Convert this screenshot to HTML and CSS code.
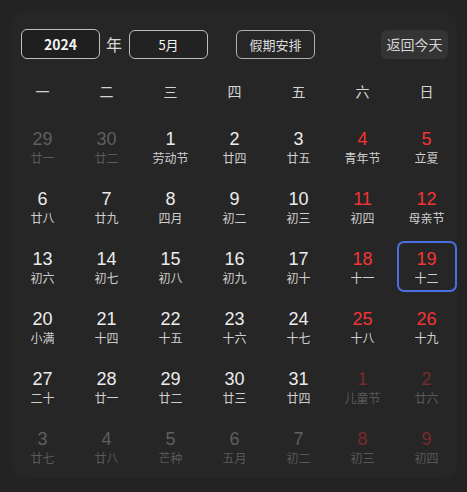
FILE: index.html
```html
<!DOCTYPE html>
<html lang="zh">
<head>
<meta charset="utf-8">
<link rel="stylesheet" href="styles.css">
</head>
<body>
<div class="card">
  <div class="toolbar">
    <div class="select year">2024</div>
    <span class="unit">年</span>
    <div class="select month">5月</div>
    <button class="btn outline">假期安排</button>
    <span class="spacer"></span>
    <button class="btn fill">返回今天</button>
  </div>
  <div class="weekdays">
    <span>一</span><span>二</span><span>三</span><span>四</span><span>五</span><span>六</span><span>日</span>
  </div>
  <div class="days">
    <div class="day other"><b>29</b><i>廿一</i></div>
    <div class="day other"><b>30</b><i>廿二</i></div>
    <div class="day"><b>1</b><i>劳动节</i></div>
    <div class="day"><b>2</b><i>廿四</i></div>
    <div class="day"><b>3</b><i>廿五</i></div>
    <div class="day wk"><b>4</b><i>青年节</i></div>
    <div class="day wk"><b>5</b><i>立夏</i></div>

    <div class="day"><b>6</b><i>廿八</i></div>
    <div class="day"><b>7</b><i>廿九</i></div>
    <div class="day"><b>8</b><i>四月</i></div>
    <div class="day"><b>9</b><i>初二</i></div>
    <div class="day"><b>10</b><i>初三</i></div>
    <div class="day wk"><b>11</b><i>初四</i></div>
    <div class="day wk"><b>12</b><i>母亲节</i></div>

    <div class="day"><b>13</b><i>初六</i></div>
    <div class="day"><b>14</b><i>初七</i></div>
    <div class="day"><b>15</b><i>初八</i></div>
    <div class="day"><b>16</b><i>初九</i></div>
    <div class="day"><b>17</b><i>初十</i></div>
    <div class="day wk"><b>18</b><i>十一</i></div>
    <div class="day wk today"><b>19</b><i>十二</i></div>

    <div class="day"><b>20</b><i>小满</i></div>
    <div class="day"><b>21</b><i>十四</i></div>
    <div class="day"><b>22</b><i>十五</i></div>
    <div class="day"><b>23</b><i>十六</i></div>
    <div class="day"><b>24</b><i>十七</i></div>
    <div class="day wk"><b>25</b><i>十八</i></div>
    <div class="day wk"><b>26</b><i>十九</i></div>

    <div class="day"><b>27</b><i>二十</i></div>
    <div class="day"><b>28</b><i>廿一</i></div>
    <div class="day"><b>29</b><i>廿二</i></div>
    <div class="day"><b>30</b><i>廿三</i></div>
    <div class="day"><b>31</b><i>廿四</i></div>
    <div class="day other wk"><b>1</b><i>儿童节</i></div>
    <div class="day other wk"><b>2</b><i>廿六</i></div>

    <div class="day other"><b>3</b><i>廿七</i></div>
    <div class="day other"><b>4</b><i>廿八</i></div>
    <div class="day other"><b>5</b><i>芒种</i></div>
    <div class="day other"><b>6</b><i>五月</i></div>
    <div class="day other"><b>7</b><i>初二</i></div>
    <div class="day other wk"><b>8</b><i>初三</i></div>
    <div class="day other wk"><b>9</b><i>初四</i></div>
  </div>
</div>
</body>
</html>
```

FILE: styles.css
```css
* { box-sizing: border-box; }
html, body {
  margin: 0;
  background: #232323;
  font-family: "Noto Sans CJK SC", "Noto Sans", sans-serif;
  color: #e6e6e6;
}
body { padding: 12px 10px 14px 12px; }
.card {
  width: 445px;
  height: 466px;
  background: #262626;
  border-radius: 14px;
  padding: 17px 9px 6px 9px;
  display: flex;
  flex-direction: column;
  align-items: center;
}
.toolbar {
  width: 100%;
  display: flex;
  align-items: center;
  height: 30px;
}
.select {
  width: 79px;
  height: 30px;
  border: 1px solid #bdbdbd;
  border-radius: 6px;
  background: #1f1f1f;
  display: flex;
  align-items: center;
  justify-content: center;
  color: #f2f2f2;
}
.year { font-size: 14px; font-weight: 700; }
.month { font-size: 13px; height: 29px; background: #222; }
.unit {
  font-size: 16px;
  color: #d8d8d8;
  margin: 0 7px 0 6px;
  line-height: 30px;
}
.btn {
  font-family: inherit;
  height: 29px;
  border-radius: 6px;
  padding: 0;
  cursor: pointer;
}
.outline {
  width: 79px;
  margin-left: 28px;
  background: transparent;
  border: 1px solid #b0b0b0;
  color: #dedede;
  font-size: 13px;
}
.spacer { flex: 1; }
.fill {
  width: 67px;
  background: #343434;
  border: none;
  color: #d6d6d6;
  font-size: 14px;
}
.weekdays {
  margin-top: 12px;
  display: grid;
  grid-template-columns: repeat(7, 64px);
  height: 40px;
  align-items: center;
  font-size: 14px;
  color: #d4d4d4;
}
.weekdays span { text-align: center; }
.days {
  margin-top: 10px;
  display: grid;
  grid-template-columns: repeat(7, 64px);
  grid-auto-rows: 51px;
  row-gap: 9px;
}
.day {
  margin: 0 2px;
  border-radius: 7px;
  border: 2px solid transparent;
  padding-top: 2px;
  display: flex;
  flex-direction: column;
  align-items: center;
  justify-content: center;
}
.day b {
  display: block;
  font-family: "Liberation Sans", Arial, sans-serif;
  font-weight: 400;
  font-size: 18px;
  line-height: 20px;
  height: 20px;
  color: #ececec;
}
.day i {
  display: block;
  font-style: normal;
  font-size: 12px;
  line-height: 18px;
  height: 18px;
  color: #cfcfcf;
}
.day.wk b { color: #f23434; }
.day.other b { color: #5f5f5f; }
.day.other i { color: #595959; }
.day.other.wk b { color: #7a2a2c; }
.today { border-color: #4a6fe3; }
```
